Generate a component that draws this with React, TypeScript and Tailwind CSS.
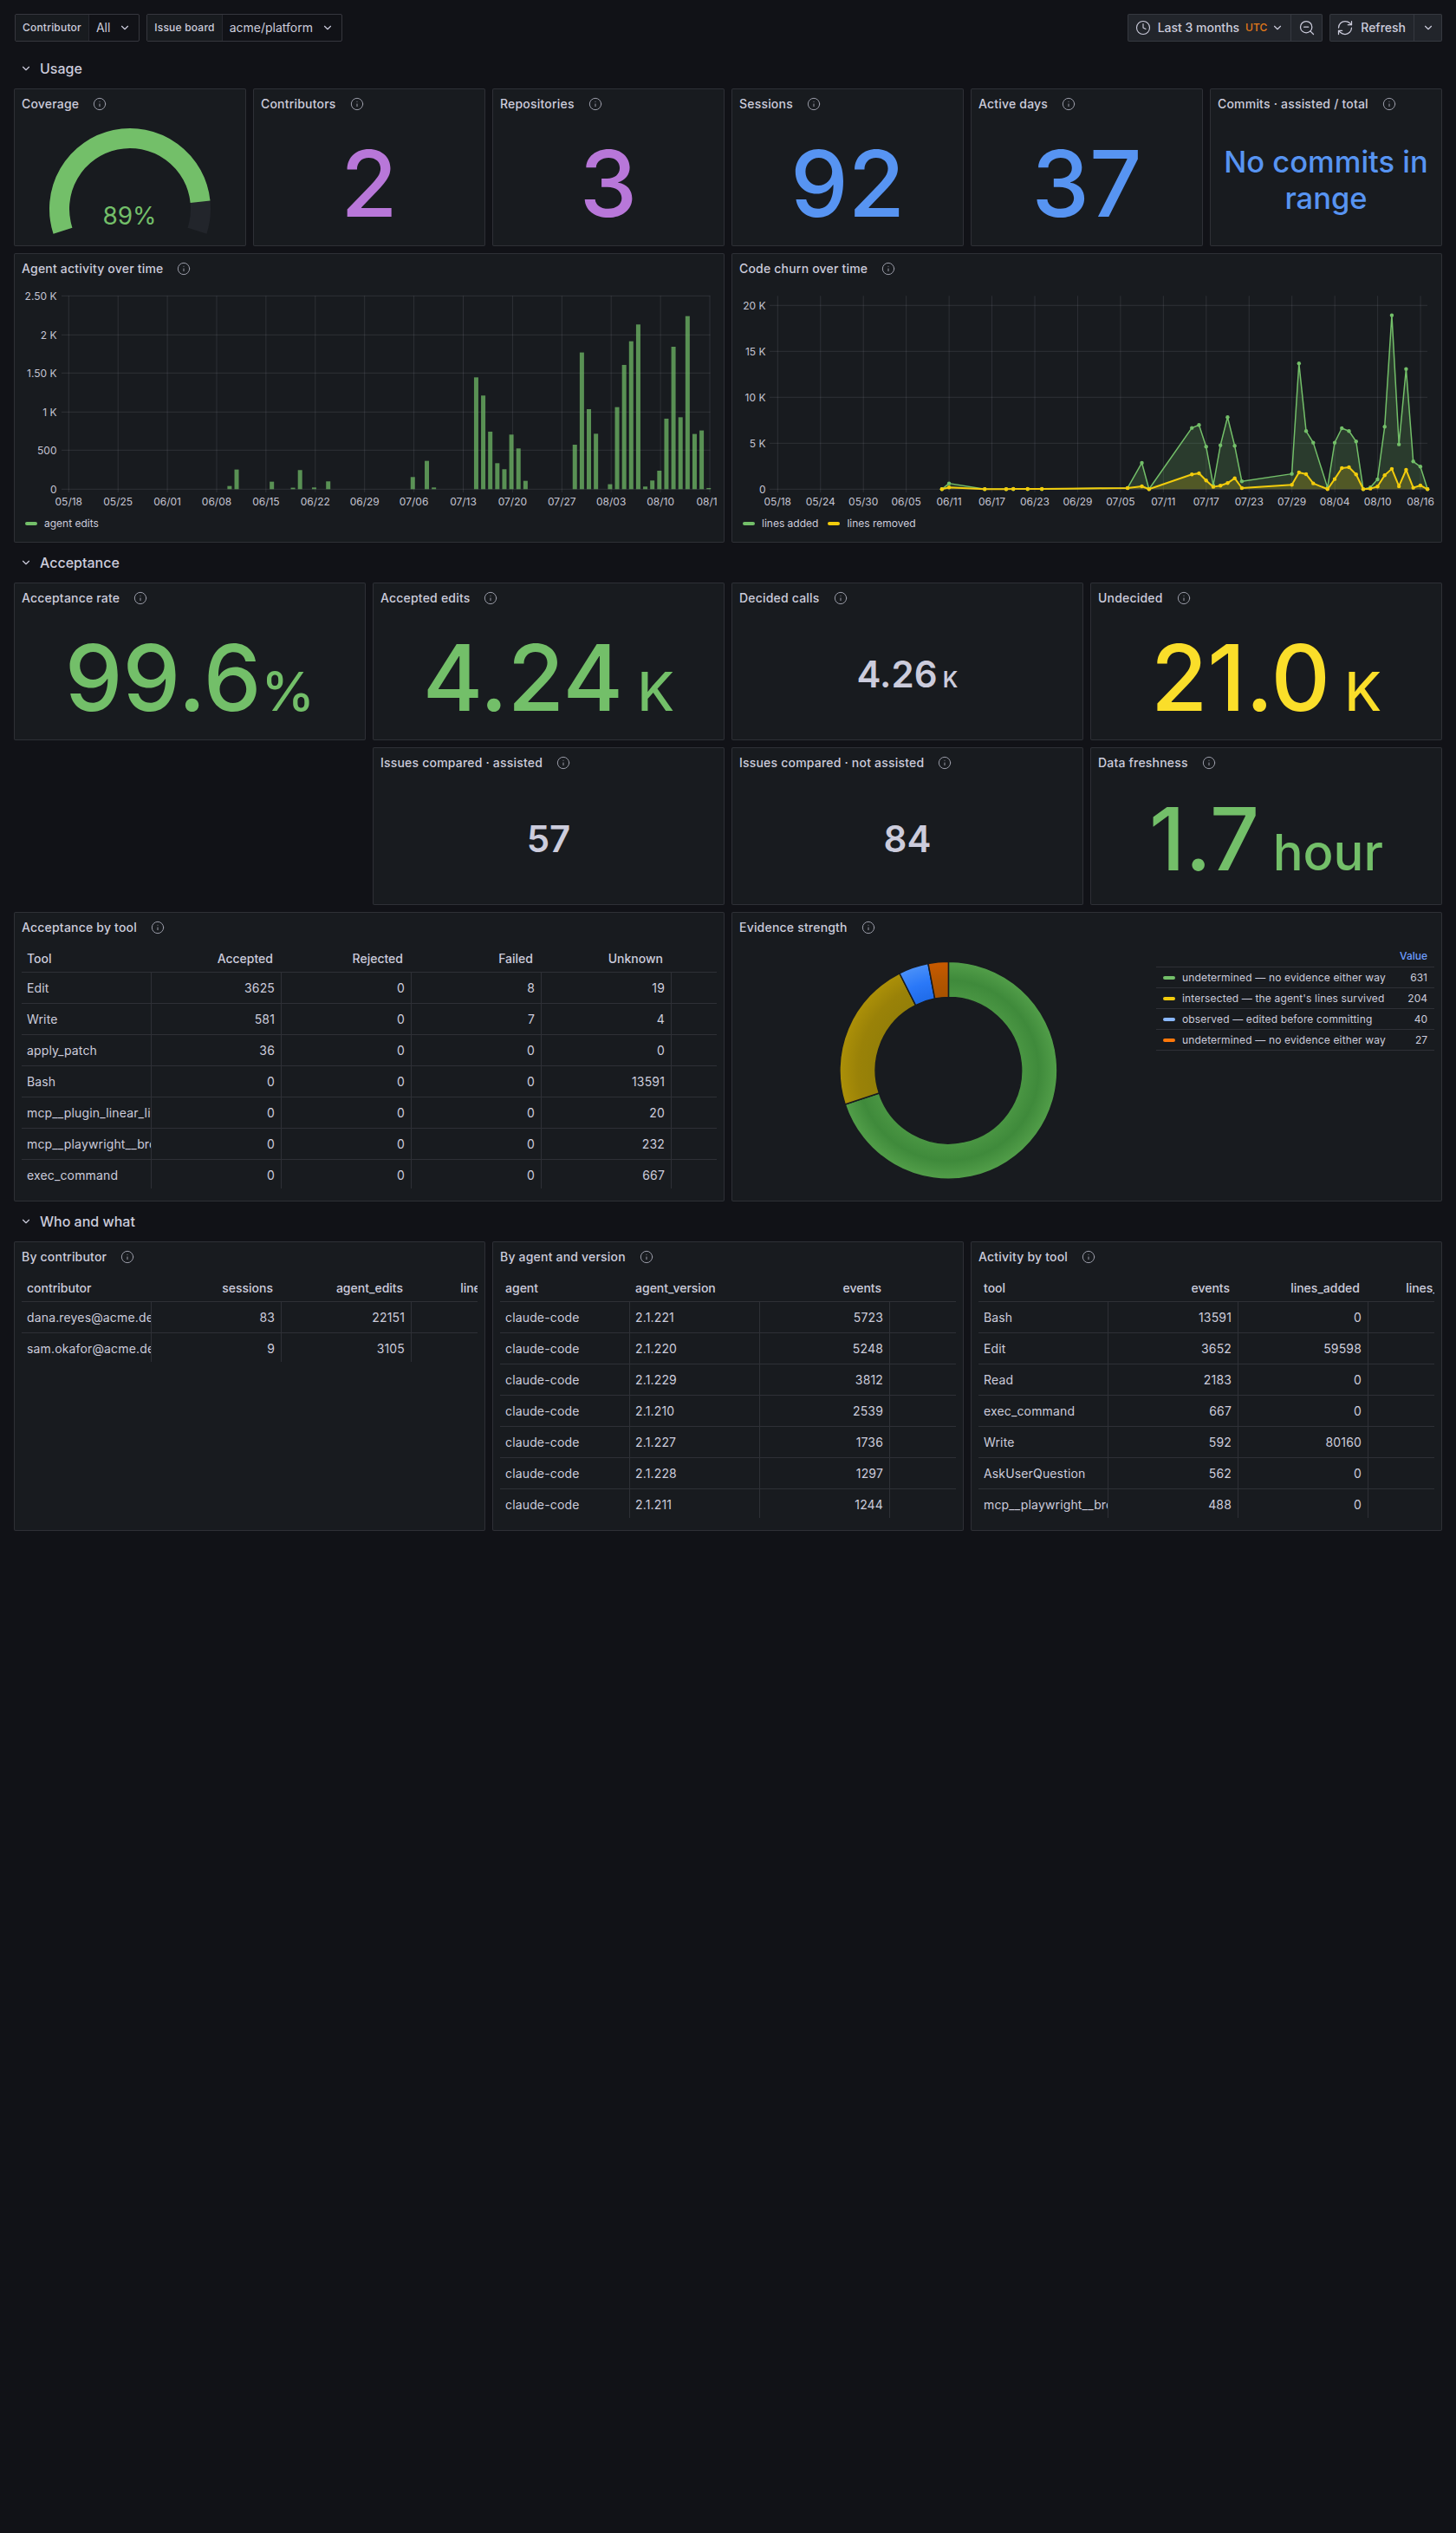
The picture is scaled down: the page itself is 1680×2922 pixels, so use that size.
import React from 'react';
import { ChevronDown, Clock, Info, RefreshCw, ZoomOut } from 'lucide-react';

const GREEN = '#73bf69';
const YELLOW = '#f2cc0c';
const GRID = 'rgba(204,204,220,0.12)';
const AXIS = '#c4c4d2';

const Panel: React.FC<{ title: string; className?: string; children: React.ReactNode }> = ({ title, className = '', children }) => (
  <div className={`flex flex-col overflow-hidden rounded-[2px] border border-[rgba(204,204,220,0.12)] bg-[#181b1f] ${className}`}>
    <div className="flex h-[33px] shrink-0 items-center gap-4 px-2">
      <span className="text-sm font-medium tracking-[0.2px] whitespace-nowrap">{title}</span>
      <Info size={16} strokeWidth={1.5} className="text-[#9a9ca8]" />
    </div>
    {children}
  </div>
);

const Stat: React.FC<{
  title: string;
  value: string;
  unit?: string;
  color: string;
  size: string;
  unitSize?: string;
  className?: string;
}> = ({ title, value, unit, color, size, unitSize, className = '' }) => (
  <Panel title={title} className={`h-[182px] ${className}`}>
    <div className={`flex flex-1 items-center justify-center pb-[3px] whitespace-pre ${color} ${size}`}>
      <span>
        {value}
        {unit && <span className={unitSize}>{unit}</span>}
      </span>
    </div>
  </Panel>
);

const RowTitle: React.FC<{ title: string }> = ({ title }) => (
  <div className="flex h-[30px] items-center gap-[9px] pl-[7px]">
    <ChevronDown size={14} />
    <span className="text-base font-medium">{title}</span>
  </div>
);

const polar = (cx: number, cy: number, r: number, deg: number) => {
  const a = ((deg - 90) * Math.PI) / 180;
  return [cx + r * Math.cos(a), cy + r * Math.sin(a)];
};

const arc = (cx: number, cy: number, r: number, from: number, to: number) => {
  const [x0, y0] = polar(cx, cy, r, from);
  const [x1, y1] = polar(cx, cy, r, to);
  return `M${x0} ${y0}A${r} ${r} 0 ${to - from > 180 ? 1 : 0} 1 ${x1} ${y1}`;
};

const sector = (cx: number, cy: number, ro: number, ri: number, from: number, to: number) => {
  const [x0, y0] = polar(cx, cy, ro, from);
  const [x1, y1] = polar(cx, cy, ro, to);
  const [x2, y2] = polar(cx, cy, ri, to);
  const [x3, y3] = polar(cx, cy, ri, from);
  const large = to - from > 180 ? 1 : 0;
  return `M${x0} ${y0}A${ro} ${ro} 0 ${large} 1 ${x1} ${y1}L${x2} ${y2}A${ri} ${ri} 0 ${large} 0 ${x3} ${y3}Z`;
};

const Gauge = () => (
  <svg viewBox="17 136 266 147" width={266} height={147} className="block">
    <path d={arc(150, 241, 81.5, -108, 108)} fill="none" stroke="#22252b" strokeWidth={23} />
    <path d={arc(150, 241, 81.5, -108, 84.2)} fill="none" stroke={GREEN} strokeWidth={23} />
    <text x={149.5} y={259} textAnchor="middle" fontSize={28} fill={GREEN}>
      89%
    </text>
  </svg>
);

const Axes: React.FC<{
  left: number;
  right: number;
  labelX: number;
  yTicks: [string, number][];
  xStart: number;
  xStep: number;
  xLabels: string[];
}> = ({ left, right, labelX, yTicks, xStart, xStep, xLabels }) => (
  <g fontSize={12} fill={AXIS}>
    {yTicks.map(([label, y]) => (
      <g key={label}>
        <line x1={left} x2={right} y1={y} y2={y} stroke={GRID} />
        <text x={labelX} y={y + 4.5} textAnchor="end">
          {label}
        </text>
      </g>
    ))}
    {xLabels.map((label, i) => {
      const x = xStart + i * xStep;
      return (
        <g key={label}>
          <line x1={x} x2={x} y1={341.3} y2={568} stroke={GRID} />
          <text x={x} y={583} textAnchor="middle">
            {label}
          </text>
        </g>
      );
    })}
  </g>
);

const Legend: React.FC<{ items: [string, string][]; className?: string }> = ({ items, className = '' }) => (
  <div className={`flex h-[24px] items-center gap-[11px] text-xs ${className}`}>
    {items.map(([label, color]) => (
      <div key={label} className="flex items-center gap-2">
        <span className="h-1 w-3.5 rounded-[2px]" style={{ background: color }} />
        <span>{label}</span>
      </div>
    ))}
  </div>
);

const BARS: [number, number][] = [
  [23, 41], [24, 254], [29, 97], [32, 19], [33, 247], [35, 22], [37, 101], [49, 157], [51, 366], [52, 22],
  [58, 1446], [59, 1211], [60, 744], [61, 336], [62, 258], [63, 706], [64, 527], [65, 108], [72, 575], [73, 1768],
  [74, 1035], [75, 717], [77, 64], [78, 1061], [79, 1607], [80, 1913], [81, 2130], [82, 34], [83, 112], [84, 239],
  [85, 912], [86, 1842], [87, 930], [88, 2238], [89, 714], [90, 759], [91, 15],
];

const ActivityChart = () => (
  <svg viewBox="17 326 810 266" width={810} height={266} className="block">
    <Axes
      left={71}
      right={819.6}
      labelX={65.5}
      yTicks={[['2.50 K', 341.3], ['2 K', 386.3], ['1.50 K', 430.3], ['1 K', 475.3], ['500', 519.3], ['0', 564.3]]}
      xStart={79.3}
      xStep={56.9}
      xLabels={['05/18', '05/25', '06/01', '06/08', '06/15', '06/22', '06/29', '07/06', '07/13', '07/20', '07/27', '08/03', '08/10', '08/17']}
    />
    {BARS.map(([day, value]) => {
      const h = (value / 2500) * 223;
      return <rect key={day} x={75.4 + day * 8.13} y={564.3 - h} width={5} height={h} fill={GREEN} fillOpacity={0.72} />;
    })}
  </svg>
);

// day, lines added, lines removed
const CHURN: [number, number, number][] = [
  [23, 0, 0], [24, 629, 189], [29, 0, 0], [32, 0, 0], [33, 0, 31], [35, 0, 31], [37, 0, 31], [49, 126, 126], [51, 2862, 314], [52, 0, 0],
  [58, 6667, 1604], [59, 6981, 1730], [60, 4623, 943], [61, 409, 252], [62, 4780, 377], [63, 7831, 660], [64, 4717, 1195], [65, 849, 126],
  [72, 1667, 472], [73, 13679, 1824], [74, 6321, 1635], [75, 5063, 629], [77, 157, 0], [78, 5063, 1100], [79, 6636, 2300], [80, 6321, 2390],
  [81, 5189, 1604], [82, 0, 0], [83, 189, 63], [84, 1069, 283], [85, 6793, 1510], [86, 18931, 2210], [87, 4874, 314], [88, 13082, 2105],
  [89, 3019, 157], [90, 2453, 409], [91, 0, 0],
];

const churnX = (day: number) => 897.3 + day * 8.24;
const churnY = (v: number) => 564.3 - (v / 20000) * 212;

const ChurnSeries: React.FC<{ index: 1 | 2; color: string; width: number }> = ({ index, color, width }) => {
  const pts = CHURN.map((d) => `${churnX(d[0])},${churnY(d[index])}`);
  return (
    <g>
      <polygon points={`${churnX(23)},564.3 ${pts.join(' ')} ${churnX(91)},564.3`} fill={color} fillOpacity={0.2} />
      <polyline points={pts.join(' ')} fill="none" stroke={color} strokeWidth={width} strokeLinejoin="round" />
      {CHURN.map((d) => (
        <circle key={d[0]} cx={churnX(d[0])} cy={churnY(d[index])} r={2.2} fill={color} />
      ))}
    </g>
  );
};

const ChurnChart = () => (
  <svg viewBox="845 326 810 266" width={810} height={266} className="block">
    <Axes
      left={888}
      right={1647}
      labelX={883.5}
      yTicks={[['20 K', 352.3], ['15 K', 405.3], ['10 K', 458.3], ['5 K', 511.3], ['0', 564.3]]}
      xStart={897.3}
      xStep={49.45}
      xLabels={['05/18', '05/24', '05/30', '06/05', '06/11', '06/17', '06/23', '06/29', '07/05', '07/11', '07/17', '07/23', '07/29', '08/04', '08/10', '08/16']}
    />
    <ChurnSeries index={1} color={GREEN} width={1.5} />
    <ChurnSeries index={2} color={YELLOW} width={2} />
  </svg>
);

type Column = { label: string; width: number; right?: boolean };

const DataTable: React.FC<{ columns: Column[]; rows: (string | number)[][] }> = ({ columns, rows }) => (
  <div className="mt-[6px] px-2">
    <div className="flex h-[30px] items-center overflow-hidden border-b border-[rgba(204,204,220,0.12)] pb-[1px] font-medium">
      {columns.map((c) => (
        <div key={c.label} className={`shrink-0 pr-[10px] pl-[6px] whitespace-nowrap ${c.right ? 'text-right' : ''}`} style={{ width: c.width }}>
          {c.label}
        </div>
      ))}
    </div>
    {rows.map((row, r) => (
      <div
        key={r}
        className={`flex overflow-hidden tracking-[0.15px] ${r === rows.length - 1 ? 'h-[33px]' : 'h-9 border-b border-[rgba(204,204,220,0.12)]'}`}
      >
        {columns.map((c, i) => (
          <div
            key={c.label}
            className={`flex h-9 shrink-0 items-center overflow-hidden border-r border-[rgba(204,204,220,0.12)] pl-[6px] whitespace-nowrap ${c.right ? 'justify-end pr-[7px]' : ''}`}
            style={{ width: c.width }}
          >
            {row[i]}
          </div>
        ))}
      </div>
    ))}
  </div>
);

const SLICES = [
  { id: 'g', value: 631, stops: ['#4a9643', '#3f8a3b', '#529e49'] },
  { id: 'y', value: 204, stops: ['#947f08', '#9a8208', '#ac9008'] },
  { id: 'b', value: 40, stops: ['#1f6be8', '#2a78f8', '#4a90f8'] },
  { id: 'o', value: 27, stops: ['#a85200', '#b35600', '#c95a00'] },
];

const Donut = () => {
  const total = SLICES.reduce((s, x) => s + x.value, 0);
  let angle = 0;
  return (
    <svg viewBox="845 1086 489 299" width={489} height={299} className="block shrink-0">
      <defs>
        {SLICES.map((s) => (
          <radialGradient key={s.id} id={s.id} gradientUnits="userSpaceOnUse" cx={1094.4} cy={1234.8} r={125.5}>
            <stop offset="0.67" stopColor={s.stops[0]} />
            <stop offset="0.83" stopColor={s.stops[1]} />
            <stop offset="1" stopColor={s.stops[2]} />
          </radialGradient>
        ))}
      </defs>
      {SLICES.map((s) => {
        const from = angle;
        angle += (s.value / total) * 360;
        return (
          <path
            key={s.id}
            d={sector(1094.4, 1234.8, 125.5, 84.2, from, angle)}
            fill={`url(#${s.id})`}
            stroke="#181b1f"
            strokeWidth={1.5}
            strokeLinejoin="round"
          />
        );
      })}
    </svg>
  );
};

const EVIDENCE: [string, number, string][] = [
  ['undetermined — no evidence either way', 631, GREEN],
  ["intersected — the agent's lines survived", 204, YELLOW],
  ['observed — edited before committing', 40, '#8ab8ff'],
  ['undetermined — no evidence either way', 27, '#ff780a'],
];

const EvidenceLegend = () => (
  <div className="mt-[5px] w-[321px] shrink-0 text-xs">
    <div className="flex h-[25px] items-center justify-end border-b border-[rgba(204,204,220,0.12)] pr-2 font-medium text-[#6e9fff]">Value</div>
    {EVIDENCE.map(([label, value, color], i) => (
      <div key={i} className="flex h-6 items-center border-b border-[rgba(204,204,220,0.12)] pr-2 pl-2">
        <span className="mr-2 h-1 w-3.5 rounded-[2px]" style={{ background: color }} />
        <span className="tracking-[0.15px]">{label}</span>
        <span className="ml-auto">{value}</span>
      </div>
    ))}
  </div>
);

const Divider = () => <span className="h-full w-px bg-[rgba(204,204,220,0.12)]" />;

const Filter: React.FC<{ label: string; value: string }> = ({ label, value }) => (
  <div className="flex h-8 items-center rounded-[2px] border border-[rgba(204,204,220,0.2)]">
    <span className="flex h-full items-center bg-[#181b1f] px-2 text-xs font-medium tracking-[0.2px]">{label}</span>
    <Divider />
    <div className="flex items-center gap-[10px] pr-[9px] pl-2 text-sm">
      <span>{value}</span>
      <ChevronDown size={14} />
    </div>
  </div>
);

const TopBar = () => (
  <div className="flex h-8 items-center justify-between">
    <div className="flex gap-2 pl-[1px]">
      <Filter label="Contributor" value="All" />
      <Filter label="Issue board" value="acme/platform" />
    </div>
    <div className="flex gap-2 text-sm font-medium">
      <div className="flex h-8 items-center rounded-[2px] border border-[rgba(204,204,220,0.12)] bg-[#22252b]">
        <div className="flex items-center pr-2 pl-2">
          <Clock size={18} strokeWidth={1.5} />
          <span className="ml-2">Last 3 months</span>
          <span className="ml-[7px] text-xs text-[#e37a1a]">UTC</span>
          <ChevronDown size={14} className="ml-[5px]" />
        </div>
        <Divider />
        <div className="flex w-[35px] justify-center">
          <ZoomOut size={20} strokeWidth={1.5} />
        </div>
      </div>
      <div className="flex h-8 items-center rounded-[2px] border border-[rgba(204,204,220,0.12)] bg-[#22252b]">
        <div className="flex items-center pr-[9px] pl-[7px]">
          <RefreshCw size={20} strokeWidth={1.5} />
          <span className="ml-2">Refresh</span>
        </div>
        <Divider />
        <div className="flex w-[31px] justify-center">
          <ChevronDown size={14} />
        </div>
      </div>
    </div>
  </div>
);

const BIG = 'text-[106px] font-medium';
const SMALL = 'text-[42px] font-semibold';

export default function App() {
  return (
    <div className="min-h-[2922px] bg-[#111217] px-4 pt-4 font-['Inter',sans-serif] text-sm text-[#ccccdc]">
      <TopBar />
      <div className="mt-4 flex flex-col gap-2">
        <RowTitle title="Usage" />
        <div className="grid grid-cols-6 gap-2">
          <Panel title="Coverage" className="h-[182px]">
            <Gauge />
          </Panel>
          <Stat title="Contributors" value="2" color="text-[#b877d9]" size={BIG} />
          <Stat title="Repositories" value="3" color="text-[#b877d9]" size={BIG} />
          <Stat title="Sessions" value="92" color="text-[#5794f2]" size={BIG} />
          <Stat title="Active days" value="37" color="text-[#5794f2]" size={BIG} />
          <Panel title="Commits · assisted / total" className="h-[182px]">
            <div className="flex flex-1 items-center justify-center px-2 pb-[3px] text-center text-[34.5px] leading-[42px] font-medium text-[#5794f2]">
              No commits in range
            </div>
          </Panel>
        </div>
        <div className="grid grid-cols-2 gap-2">
          <Panel title="Agent activity over time" className="h-[334px]">
            <ActivityChart />
            <Legend className="pl-3" items={[['agent edits', GREEN]]} />
          </Panel>
          <Panel title="Code churn over time" className="h-[334px]">
            <ChurnChart />
            <Legend
              className="pl-3"
              items={[
                ['lines added', GREEN],
                ['lines removed', YELLOW],
              ]}
            />
          </Panel>
        </div>

        <RowTitle title="Acceptance" />
        <div className="grid grid-cols-4 gap-2">
          <Stat title="Acceptance rate" value="99.6" unit="%" color="text-[#73bf69]" size={BIG} unitSize="text-[62px]" />
          <Stat title="Accepted edits" value="4.24" unit=" K" color="text-[#73bf69]" size={BIG} unitSize="text-[62px]" />
          <Stat title="Decided calls" value="4.26" unit=" K" color="text-[#ccccdc]" size={SMALL} unitSize="text-[25px]" />
          <Stat title="Undecided" value="21.0" unit=" K" color="text-[#fade2a]" size={BIG} unitSize="text-[62px]" />
          <Stat title="Issues compared · assisted" value="57" color="text-[#ccccdc]" size={SMALL} className="col-start-2" />
          <Stat title="Issues compared · not assisted" value="84" color="text-[#ccccdc]" size={SMALL} />
          <Stat title="Data freshness" value="1.7" unit=" hour" color="text-[#73bf69]" size="text-[100px] font-medium" unitSize="text-[58px]" />
        </div>
        <div className="grid grid-cols-2 gap-2">
          <Panel title="Acceptance by tool" className="h-[334px]">
            <DataTable
              columns={[
                { label: 'Tool', width: 150 },
                { label: 'Accepted', width: 150, right: true },
                { label: 'Rejected', width: 150, right: true },
                { label: 'Failed', width: 150, right: true },
                { label: 'Unknown', width: 150, right: true },
              ]}
              rows={[
                ['Edit', 3625, 0, 8, 19],
                ['Write', 581, 0, 7, 4],
                ['apply_patch', 36, 0, 0, 0],
                ['Bash', 0, 0, 0, 13591],
                ['mcp__plugin_linear_linear__list', 0, 0, 0, 20],
                ['mcp__playwright__browser_click', 0, 0, 0, 232],
                ['exec_command', 0, 0, 0, 667],
              ]}
            />
          </Panel>
          <Panel title="Evidence strength" className="h-[334px]">
            <div className="flex">
              <Donut />
              <EvidenceLegend />
            </div>
          </Panel>
        </div>

        <RowTitle title="Who and what" />
        <div className="grid grid-cols-3 gap-2">
          <Panel title="By contributor" className="h-[334px]">
            <DataTable
              columns={[
                { label: 'contributor', width: 150 },
                { label: 'sessions', width: 150, right: true },
                { label: 'agent_edits', width: 150, right: true },
                { label: 'lines_added', width: 146, right: true },
              ]}
              rows={[
                ['dana.reyes@acme.dev', 83, 22151, ''],
                ['sam.okafor@acme.dev', 9, 3105, ''],
              ]}
            />
          </Panel>
          <Panel title="By agent and version" className="h-[334px]">
            <DataTable
              columns={[
                { label: 'agent', width: 150 },
                { label: 'agent_version', width: 150 },
                { label: 'events', width: 150, right: true },
              ]}
              rows={[
                ['claude-code', '2.1.221', 5723],
                ['claude-code', '2.1.220', 5248],
                ['claude-code', '2.1.229', 3812],
                ['claude-code', '2.1.210', 2539],
                ['claude-code', '2.1.227', 1736],
                ['claude-code', '2.1.228', 1297],
                ['claude-code', '2.1.211', 1244],
              ]}
            />
          </Panel>
          <Panel title="Activity by tool" className="h-[334px]">
            <DataTable
              columns={[
                { label: 'tool', width: 150 },
                { label: 'events', width: 150, right: true },
                { label: 'lines_added', width: 150, right: true },
                { label: 'lines_removed', width: 150, right: true },
              ]}
              rows={[
                ['Bash', 13591, 0, ''],
                ['Edit', 3652, 59598, ''],
                ['Read', 2183, 0, ''],
                ['exec_command', 667, 0, ''],
                ['Write', 592, 80160, ''],
                ['AskUserQuestion', 562, 0, ''],
                ['mcp__playwright__browser_click', 488, 0, ''],
              ]}
            />
          </Panel>
        </div>
      </div>
    </div>
  );
}
